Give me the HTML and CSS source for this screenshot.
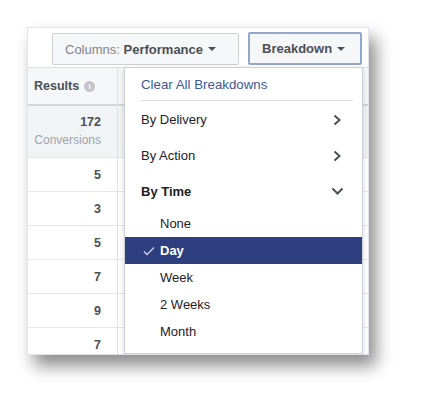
FILE: index.html
```html
<!DOCTYPE html>
<html>
<head>
<meta charset="utf-8">
<link rel="stylesheet" href="styles.css">
</head>
<body>
<div class="card">
  <div class="toolbar">
    <button class="btn cols"><span class="lbl">Columns:&nbsp;</span><b>Performance</b><span class="caret"></span></button>
    <button class="btn breakdown"><b>Breakdown</b><span class="caret"></span></button>
  </div>
  <div class="table">
    <div class="col-results">
      <div class="th">Results <span class="info">i</span></div>
      <div class="cell total"><span class="num">172</span><span class="sub">Conversions</span></div>
      <div class="cell"><span class="num">5</span></div>
      <div class="cell"><span class="num">3</span></div>
      <div class="cell"><span class="num">5</span></div>
      <div class="cell"><span class="num">7</span></div>
      <div class="cell"><span class="num">9</span></div>
      <div class="cell"><span class="num">7</span></div>
    </div>
    <div class="col-rest">
      <div class="th"></div>
      <div class="cell total"></div>
      <div class="cell"></div>
      <div class="cell"></div>
      <div class="cell"></div>
      <div class="cell"></div>
      <div class="cell"></div>
      <div class="cell"></div>
    </div>
  </div>
  <div class="menu">
    <div class="mi clear">Clear All Breakdowns</div>
    <div class="sep"></div>
    <div class="mi group"><span>By Delivery</span>
      <svg class="chev" width="10" height="12" viewBox="0 0 10 12"><path d="M2.5 1.5 L7.5 6 L2.5 10.5" fill="none" stroke="#4b4f56" stroke-width="2"/></svg>
    </div>
    <div class="mi group act"><span>By Action</span>
      <svg class="chev" width="10" height="12" viewBox="0 0 10 12"><path d="M2.5 1.5 L7.5 6 L2.5 10.5" fill="none" stroke="#4b4f56" stroke-width="2"/></svg>
    </div>
    <div class="mi group time"><b>By Time</b>
      <svg class="chevd" width="13" height="9" viewBox="0 0 13 9"><path d="M1.5 1.5 L6.5 6.5 L11.5 1.5" fill="none" stroke="#4b4f56" stroke-width="2"/></svg>
    </div>
    <div class="mi opt none">None</div>
    <div class="mi opt sel"><svg class="check" width="12" height="10" viewBox="0 0 12 10"><path d="M1 5.5 L4 8.5 L11 1.5" fill="none" stroke="#c9cfe6" stroke-width="1.4"/></svg><b>Day</b></div>
    <div class="mi opt">Week</div>
    <div class="mi opt">2 Weeks</div>
    <div class="mi opt">Month</div>
  </div>
</div>
</body>
</html>
```
FILE: styles.css
```css
* { box-sizing: border-box; }
html, body { margin: 0; padding: 0; background: #fff; }
body {
  font-family: "Liberation Sans", Arial, sans-serif;
  color: #4b4f56;
  width: 421px;
  height: 408px;
  overflow: hidden;
}
.card {
  position: relative;
  margin: 27px 0 0 27px;
  width: 342px;
  height: 328px;
  background: #fff;
  border: 1px solid #e2e3e6;
  box-shadow: 7px 11px 16px rgba(0, 0, 0, 0.45);
  overflow: hidden;
}
.toolbar {
  height: 39px;
  display: flex;
  justify-content: flex-end;
  align-items: flex-start;
  gap: 9px;
  padding: 5px 6px 0 0;
}
.btn {
  font-family: inherit;
  font-size: 13px;
  height: 32px;
  background: #f6f7f9;
  border: 1px solid #ced0d4;
  border-radius: 2px;
  color: #80848c;
  padding: 0 0 0 12px;
  display: flex;
  align-items: center;
  white-space: nowrap;
}
.btn b { color: #4b4f56; }
.cols { width: 187px; }
.breakdown {
  width: 114px;
  height: 33px;
  margin-top: -1px;
  border: 2px solid #93a6cc;
  padding-left: 12px;
  background: #f6f7f9;
}
.caret {
  display: inline-block;
  margin-left: 5px;
  width: 0; height: 0;
  border-left: 4px solid transparent;
  border-right: 4px solid transparent;
  border-top: 4px solid #4b4f56;
}
.table {
  display: flex;
  border-top: 1px solid #dddfe2;
}
.col-results {
  width: 90px;
  border-right: 1px solid #dddfe2;
}
.col-rest { flex: 1; }
.th {
  height: 38px;
  background: #f6f7f9;
  border-bottom: 2px solid #d3d5d9;
  font-size: 12.5px;
  font-weight: bold;
  display: flex;
  align-items: center;
  padding-left: 6px;
  gap: 4px;
}
.info {
  display: inline-flex;
  width: 11px; height: 11px;
  border-radius: 50%;
  background: #c2c5cb;
  color: #fff;
  font-size: 8px;
  align-items: center;
  justify-content: center;
  margin-left: 1px;
}
.cell {
  height: 34px;
  border-bottom: 1px solid #e5e6e9;
  display: flex;
  flex-direction: column;
  align-items: flex-end;
  justify-content: center;
  padding-right: 16px;
  font-size: 12.5px;
}
.cell.total {
  height: 52px;
  background: #f2f3f5;
  justify-content: flex-start;
  padding-top: 9px;
  padding-right: 16px;
}
.num { font-weight: bold; color: #4b4f56; }
.sub { color: #a0a4ab; font-size: 12px; margin-top: 4px; white-space: nowrap; }
.menu {
  position: absolute;
  left: 96px;
  top: 39px;
  width: 239px;
  height: 287px;
  background: #fff;
  border: 1px solid #ccd0d5;
  box-shadow: 0 2px 6px rgba(0, 0, 0, 0.15);
  font-size: 13px;
  color: #1d2129;
}
.mi {
  display: flex;
  align-items: center;
  padding-left: 16px;
}
.clear { height: 32px; color: #3b5998; padding-top: 1px; font-size: 13.3px; }
.sep { height: 1px; background: #dddfe2; margin: 0 9px 0 16px; }
.group { height: 35px; justify-content: space-between; padding-right: 20px; padding-top: 2px; }
.act { height: 37px; }
.time { height: 36px; padding-top: 0; }
.time b { color: #1d2129; }
.chevd { margin-right: -2px; }
.opt { height: 27px; padding-left: 35px; }
.none { height: 28px; }
.sel {
  background: #2e3f80;
  color: #fff;
  padding-left: 18px;
}
.check { margin-right: 5px; }
```
